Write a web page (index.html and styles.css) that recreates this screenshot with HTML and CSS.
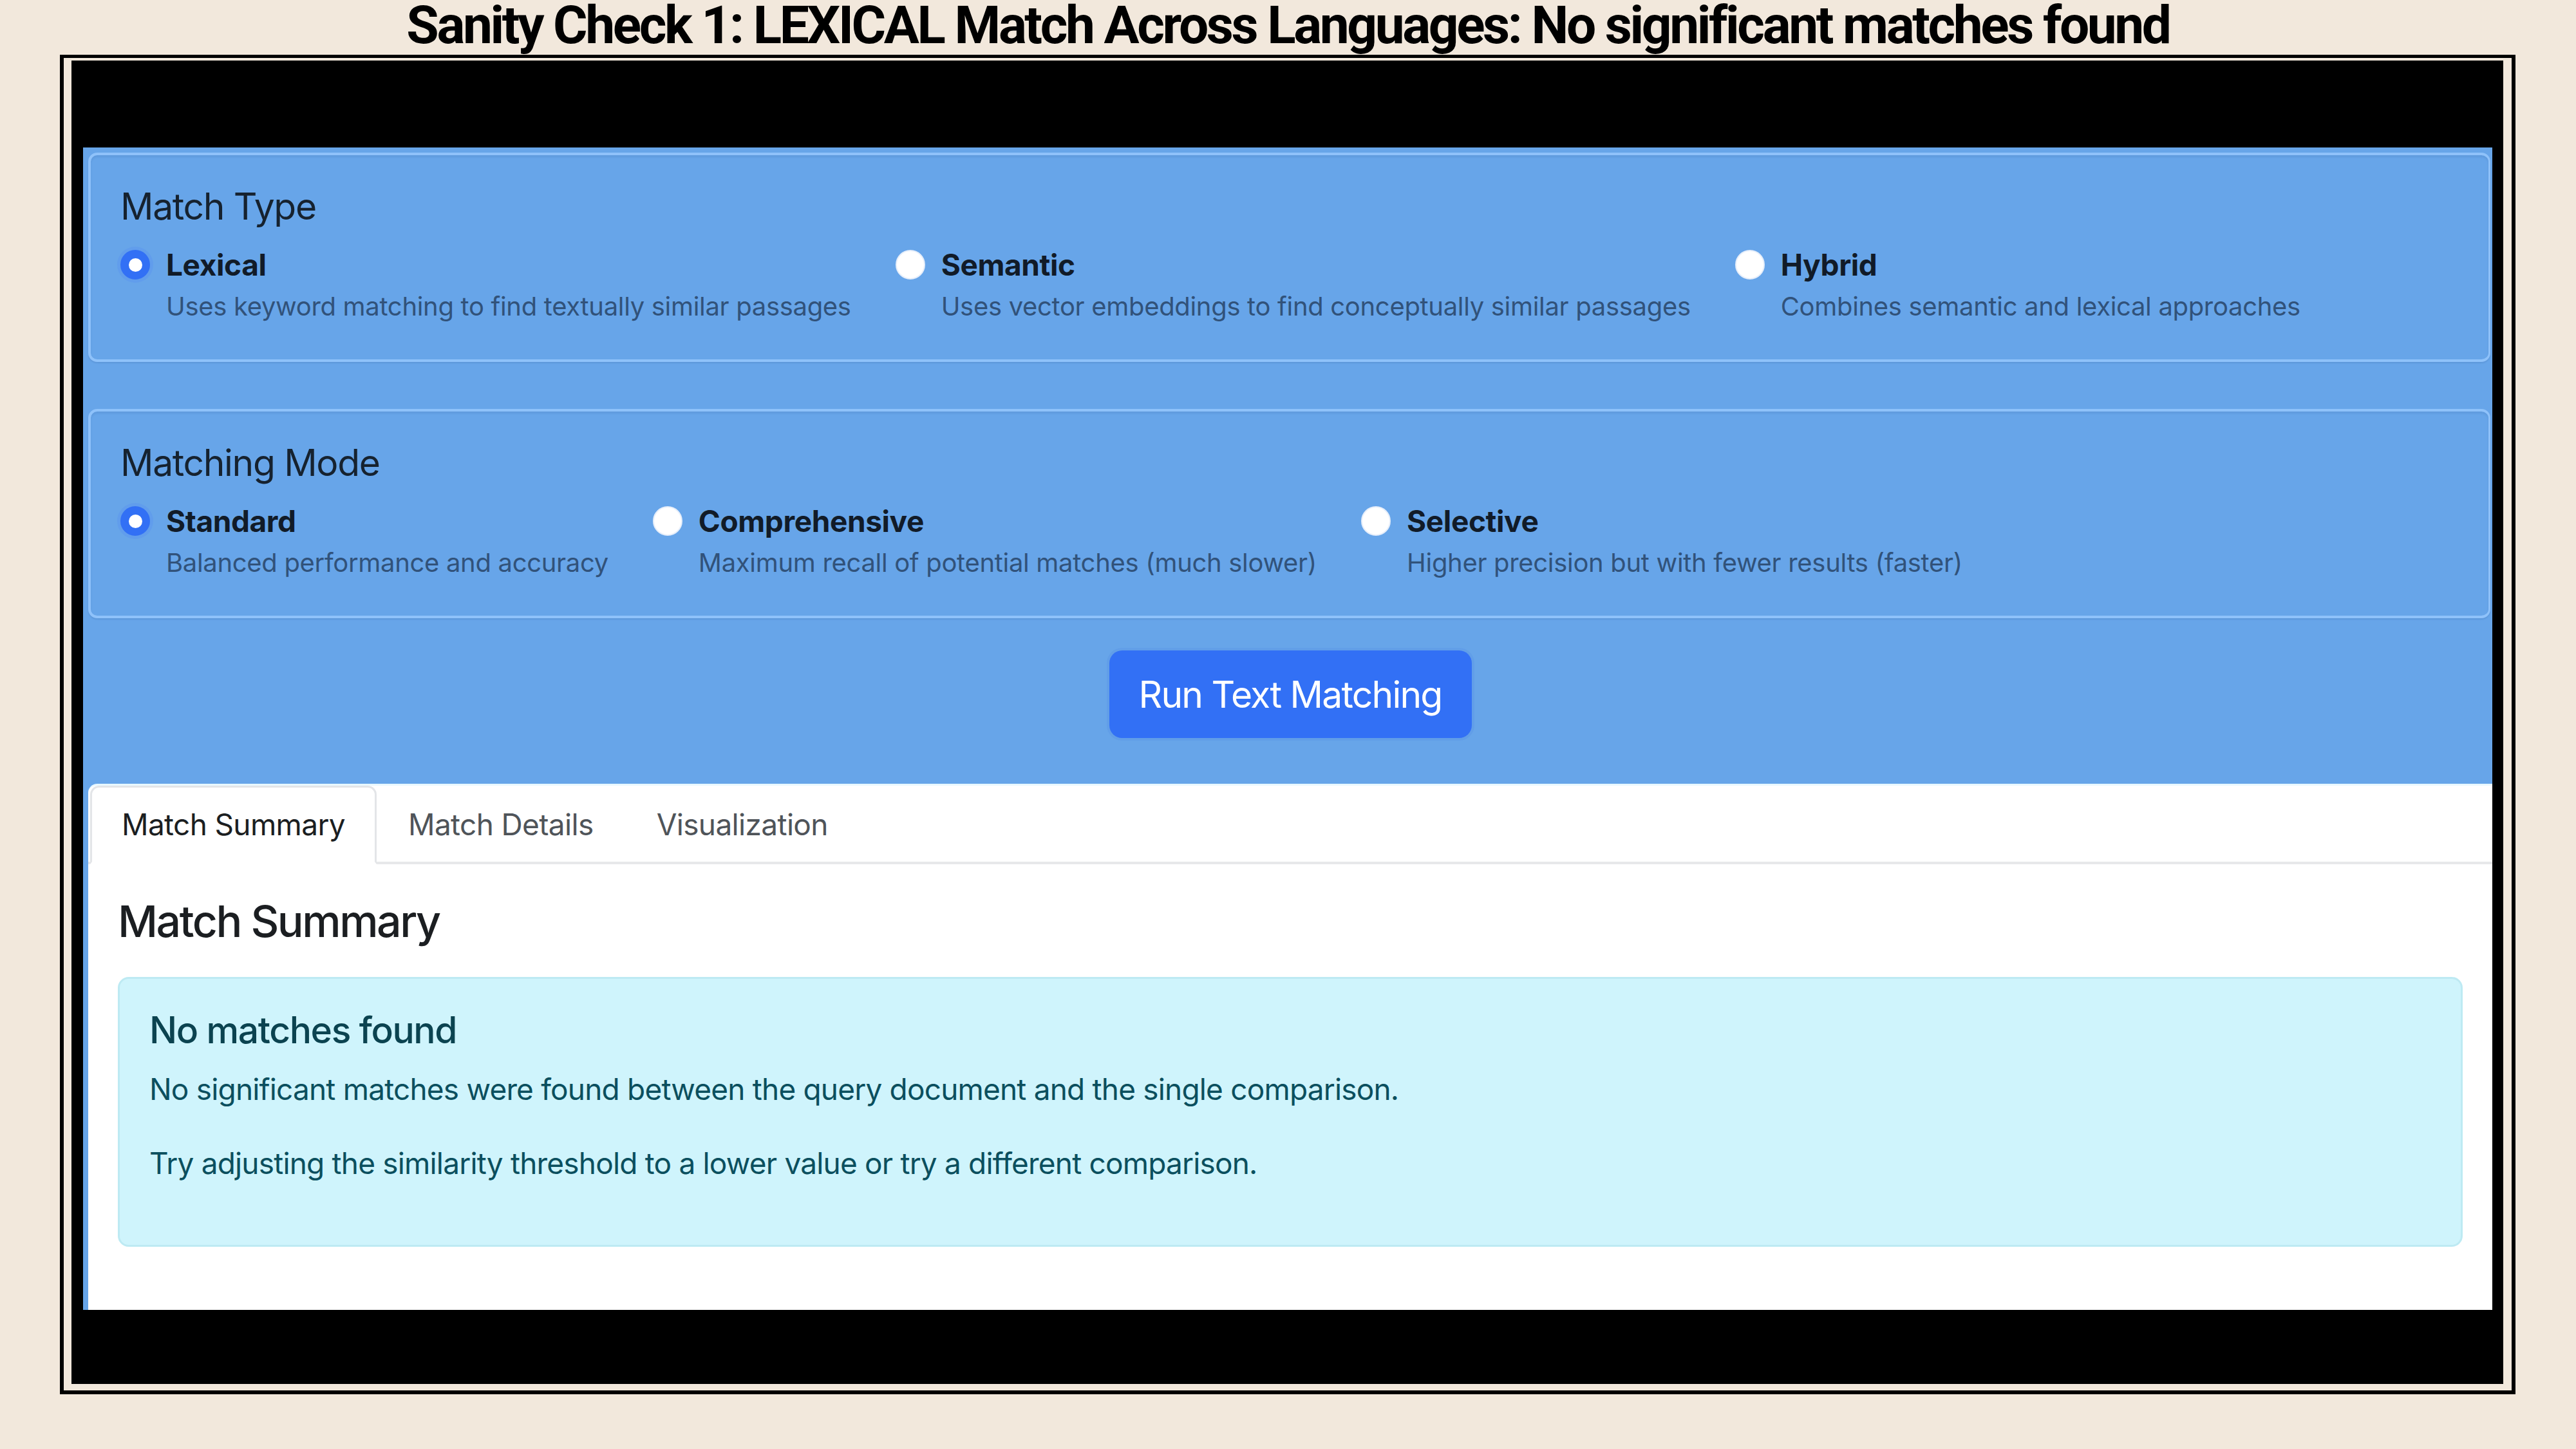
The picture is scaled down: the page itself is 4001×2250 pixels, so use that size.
FILE: index.html
```html
<!DOCTYPE html>
<html lang="en">
<head>
<meta charset="utf-8">
<title>Sanity Check 1</title>
<link rel="stylesheet" href="styles.css">
</head>
<body>
<h1 class="page-title">Sanity Check 1: LEXICAL Match Across Languages: No significant matches found</h1>
<div class="frame">
  <div class="screen">
    <div class="shot">
      <section class="card card-type">
        <div class="card-title">Match Type</div>
        <div class="options">
          <div class="option">
            <span class="radio checked"></span>
            <div class="opt-text">
              <div class="opt-label">Lexical</div>
              <div class="opt-desc">Uses keyword matching to find textually similar passages</div>
            </div>
          </div>
          <div class="option">
            <span class="radio"></span>
            <div class="opt-text">
              <div class="opt-label">Semantic</div>
              <div class="opt-desc">Uses vector embeddings to find conceptually similar passages</div>
            </div>
          </div>
          <div class="option">
            <span class="radio"></span>
            <div class="opt-text">
              <div class="opt-label">Hybrid</div>
              <div class="opt-desc">Combines semantic and lexical approaches</div>
            </div>
          </div>
        </div>
      </section>

      <section class="card card-mode">
        <div class="card-title">Matching Mode</div>
        <div class="options">
          <div class="option">
            <span class="radio checked"></span>
            <div class="opt-text">
              <div class="opt-label">Standard</div>
              <div class="opt-desc">Balanced performance and accuracy</div>
            </div>
          </div>
          <div class="option">
            <span class="radio"></span>
            <div class="opt-text">
              <div class="opt-label">Comprehensive</div>
              <div class="opt-desc">Maximum recall of potential matches (much slower)</div>
            </div>
          </div>
          <div class="option">
            <span class="radio"></span>
            <div class="opt-text">
              <div class="opt-label">Selective</div>
              <div class="opt-desc">Higher precision but with fewer results (faster)</div>
            </div>
          </div>
        </div>
      </section>

      <div class="actions">
        <button class="btn-run" type="button">Run Text Matching</button>
      </div>

      <div class="results">
        <div class="tabs">
          <div class="tab active">Match Summary</div>
          <div class="tab">Match Details</div>
          <div class="tab">Visualization</div>
        </div>
        <div class="pane">
          <h2 class="pane-title">Match Summary</h2>
          <div class="alert">
            <h3 class="alert-title">No matches found</h3>
            <p class="alert-text">No significant matches were found between the query document and the single comparison.</p>
            <p class="alert-text">Try adjusting the similarity threshold to a lower value or try a different comparison.</p>
          </div>
        </div>
      </div>
    </div>
  </div>
</div>
</body>
</html>
```

FILE: styles.css
```css
html, body {
  margin: 0;
  padding: 0;
}

body {
  background: #f2e8dc;
  width: 4001px;
  height: 2250px;
  overflow: hidden;
  font-family: Inter, "Liberation Sans", Arial, sans-serif;
}

.page-title {
  margin: 0;
  height: 78px;
  line-height: 78px;
  font-family: Roboto, "Liberation Sans", sans-serif;
  font-weight: 700;
  font-size: 82px;
  letter-spacing: -3.4px;
  text-align: center;
  color: #000;
  position: relative;
  z-index: 2;
}

.frame {
  margin: 7px 0 0 93px;
  width: 3814px;
  box-sizing: border-box;
  border: 6px solid #000;
  border-top-width: 5px;
  padding: 4px 13px 10px 12px;
  background: #f2e8dc;
}

.screen {
  background: #000;
  padding: 135px 17px 115px 18px;
}

.shot {
  background: #67a5e9;
  padding: 8px 0 0 8px;
  font-family: Inter, "Liberation Sans", Arial, sans-serif;
}

.card {
  border: 4px solid #8fc2fa;
  border-right-width: 3px;
  border-radius: 14px;
  padding: 46px 46px 52px 46px;
  margin-right: 3px;
  box-shadow: inset 0 3px 3px rgba(40, 80, 140, 0.12), 0 2px 2px rgba(40, 80, 140, 0.15);
  background: #67a5e9;
}

.card-mode {
  margin-top: 73px;
}

.card-title {
  font-size: 57px;
  line-height: 68px;
  font-weight: 400;
  letter-spacing: -1.35px;
  color: #16222f;
  margin-bottom: 22px;
}

.options {
  display: flex;
  gap: 69px;
}

.option {
  display: flex;
  gap: 25px;
}

.radio {
  flex: none;
  width: 46px;
  height: 46px;
  margin-top: 11px;
  box-sizing: border-box;
  border-radius: 50%;
  background: #ffffff;
  border: 2px solid #e6eefa;
}

.radio.checked {
  background: #3270f5;
  border-color: #3270f5;
  position: relative;
  box-shadow: 0 0 0 5px rgba(70, 120, 250, 0.18);
}

.radio.checked::after {
  content: "";
  position: absolute;
  left: 50%;
  top: 50%;
  width: 21px;
  height: 21px;
  margin: -10.5px 0 0 -10.5px;
  border-radius: 50%;
  background: #ffffff;
}

.opt-label {
  font-size: 46px;
  line-height: 69px;
  font-weight: 700;
  letter-spacing: -0.4px;
  color: #111b28;
}

.opt-desc {
  font-size: 40px;
  line-height: 60px;
  letter-spacing: -0.32px;
  color: #31527a;
  white-space: nowrap;
}

.actions {
  display: flex;
  justify-content: center;
  padding: 50px 0 71px 0;
}

.btn-run {
  height: 136px;
  padding: 0 46px;
  border: none;
  border-radius: 20px;
  background: #3270f5;
  color: #ffffff;
  font-family: Inter, "Liberation Sans", Arial, sans-serif;
  font-size: 57px;
  font-weight: 400;
  letter-spacing: -1.8px;
  box-shadow: 0 0 0 4px rgba(60, 110, 230, 0.12);
}

.results {
  background: #ffffff;
  border-top: 3px solid #e9f8ff;
  border-radius: 14px 0 0 0;
}

.tabs {
  display: flex;
  border-bottom: 4px solid #e7e8ea;
  padding-left: 3px;
}

.tab {
  padding: 23px 46px;
  font-size: 46px;
  line-height: 69px;
  letter-spacing: -0.65px;
  color: #4f5459;
  border: 3px solid transparent;
  border-radius: 14px 14px 0 0;
  margin-bottom: -4px;
}

.tab.active {
  color: #1b1e21;
  background: #ffffff;
  border-color: #e3e5e8 #e3e5e8 #ffffff;
  border-bottom-width: 4px;
}

.pane {
  padding: 47px 46px 52px 46px;
}

.pane-title {
  margin: 0 0 46px 0;
  font-size: 68px;
  line-height: 82px;
  font-weight: 500;
  letter-spacing: -2.5px;
  color: #1b1e21;
}

.alert {
  background: #cff4fc;
  border: 3px solid #bdeaf3;
  border-radius: 17px;
  padding: 46px;
  margin-bottom: 46px;
  color: #0b4f5e;
}

.alert-title {
  margin: 0 0 23px 0;
  font-size: 57px;
  line-height: 68px;
  font-weight: 500;
  letter-spacing: -1.4px;
  color: #0b4350;
}

.alert-text {
  margin: 0 0 46px 0;
  font-size: 46px;
  line-height: 69px;
  letter-spacing: -0.82px;
}
```
